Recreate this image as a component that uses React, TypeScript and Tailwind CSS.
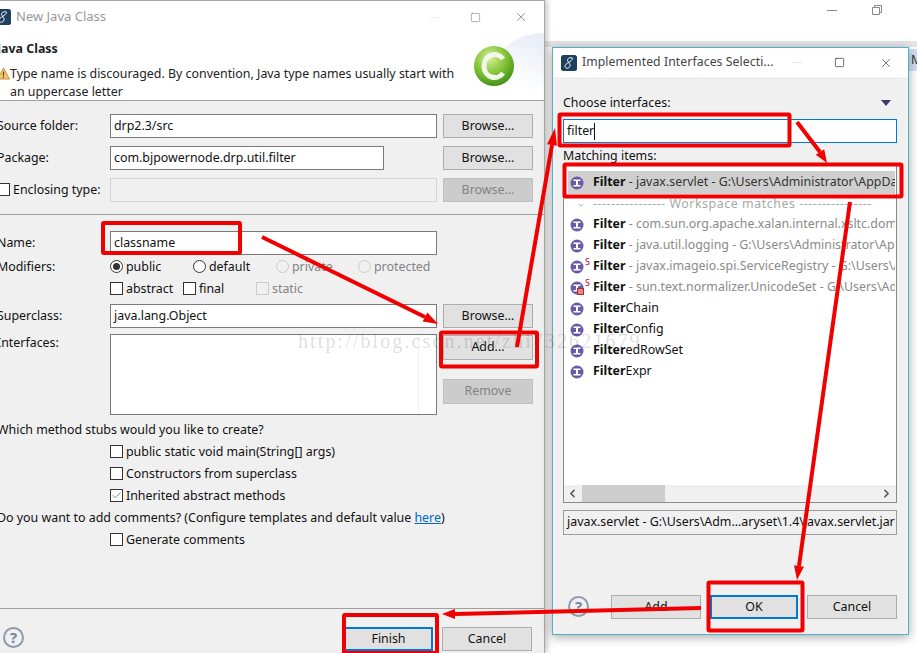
import type { ReactNode } from "react";
import { ChevronLeft, ChevronRight, Check as CheckIcon, X, Minus, Square } from "lucide-react";

const font = "font-['Noto_Sans','Open_Sans',sans-serif]";

function EclipseIcon({ className }: { className: string }) {
  return (
    <svg viewBox="0 0 16 16" className={className}>
      <rect x="0" y="0" width="16" height="16" rx="2.5" fill="#1f3f5f" />
      <path d="M11.5 3C8 2 5.5 4 7 6.5S10 10 8.5 12 4.5 13.5 4 11.5 7 8 9 6.5 12 3.5 11.5 3Z" fill="none" stroke="#fff" strokeWidth="1" />
    </svg>
  );
}

function InterfaceIcon({ overlay }: { overlay?: boolean }) {
  return (
    <svg viewBox="0 0 14 14" className="w-[14px] h-[14px] shrink-0">
      <circle cx="7" cy="7" r="6.5" fill="#6a5aa8" />
      <rect x="3.5" y="3.5" width="7" height="1.5" fill="#fff" />
      <rect x="3.5" y="9" width="7" height="1.5" fill="#fff" />
      <rect x="6" y="4" width="2" height="6" fill="#fff" />
      {overlay && <rect x="7.5" y="7.5" width="6" height="6" fill="#e8868a" stroke="#c0202a" strokeWidth="1" />}
    </svg>
  );
}

function HelpIcon() {
  return (
    <div className="w-[21px] h-[21px] rounded-full border-[2px] border-[#8c9bad] flex items-center justify-center text-[15px] font-bold text-[#73859b] leading-none shrink-0">
      ?
    </div>
  );
}

function Btn({ children, disabled, focused, w = "w-[90px]", h = "h-[24px]" }: { children: ReactNode; disabled?: boolean; focused?: boolean; w?: string; h?: string }) {
  return (
    <div
      className={`${w} ${h} shrink-0 flex items-center justify-center ${
        disabled
          ? "bg-[#cccccc] border border-[#bfbfbf] text-[#838383]"
          : focused
            ? "bg-[#e1e1e1] border-2 border-[#0078d7] text-[#111]"
            : "bg-[#e1e1e1] border border-[#adadad] text-[#111]"
      }`}
    >
      {children}
    </div>
  );
}

function Check({ label, checked, disabled }: { label: string; checked?: boolean; disabled?: boolean }) {
  return (
    <div className={`flex items-center gap-[3px] ${disabled ? "text-[#838383]" : "text-[#111]"}`}>
      <div className={`w-[13px] h-[13px] flex items-center justify-center border ${disabled ? "border-[#cccccc]" : "border-[#333] bg-white"}`}>
        {checked && <CheckIcon size={11} strokeWidth={1.5} className="text-[#555]" />}
      </div>
      <span>{label}</span>
    </div>
  );
}

function Radio({ label, checked, disabled }: { label: string; checked?: boolean; disabled?: boolean }) {
  return (
    <div className={`flex items-center gap-[3px] ${disabled ? "text-[#838383]" : "text-[#111]"}`}>
      <div className={`w-[13px] h-[13px] rounded-full border flex items-center justify-center ${disabled ? "border-[#cccccc]" : "border-[#333] bg-white"}`}>
        {checked && <div className="w-[7px] h-[7px] rounded-full bg-[#333]" />}
      </div>
      <span>{label}</span>
    </div>
  );
}

function Input({ value, className = "flex-1" }: { value?: string; className?: string }) {
  return (
    <div className={`${className} h-[24px] bg-white border border-[#7a7a7a] px-[3px] flex items-center text-[#111]`}>
      {value}
    </div>
  );
}

function FormRow({ label, children, button }: { label: ReactNode; children: ReactNode; button?: ReactNode }) {
  return (
    <div className="flex items-center h-[24px]">
      <div className="w-[113px] shrink-0 text-[#111]">{label}</div>
      <div className="w-[327px] flex">{children}</div>
      <div className="ml-[6px]">{button}</div>
    </div>
  );
}

function NewClassWindow() {
  return (
    <div className="absolute left-[-8px] top-0 w-[553px] h-[653px] bg-[#f0f0f0] border-t border-r border-[#a8a8a8] flex flex-col shadow-[2px_0_6px_rgba(0,0,0,0.25)]">
      <div className="h-[32px] bg-white flex items-center shrink-0">
        <EclipseIcon className="w-[16px] h-[16px] ml-[3px]" />
        <span className="ml-[5px] text-[#999] text-[13px]">New Java Class</span>
        <div className="ml-auto flex items-center">
          <Minus size={13} strokeWidth={1} className="text-[#ddd] mr-[29px]" />
          <Square size={11} strokeWidth={1} className="text-[#555] mr-[33px]" />
          <X size={14} strokeWidth={1} className="text-[#555] mr-[16px]" />
        </div>
      </div>
      <div className="h-[68px] bg-white border-b border-[#a0a0a0] relative shrink-0 pl-[5px] overflow-hidden">
        <div className="absolute right-0 top-0 w-[60px] h-[68px] bg-[linear-gradient(200deg,#e6ebf6,#ffffff_70%)] rounded-tl-[60px]" />
        <div className="font-bold text-[#222] leading-[18px] pt-[7px]">Java Class</div>
        <div className="flex mt-[7px] relative">
          <svg viewBox="0 0 14 14" className="w-[13px] h-[13px] shrink-0 mt-[2px]">
            <path d="M7 1 13.5 13H.5Z" fill="#f4c46c" stroke="#c8923a" />
            <rect x="6.3" y="5" width="1.4" height="4.5" fill="#6b4a12" />
            <rect x="6.3" y="10.4" width="1.4" height="1.4" fill="#6b4a12" />
          </svg>
          <div className="leading-[18px] w-[455px] text-[#222]">
            Type name is discouraged. By convention, Java type names usually start with an uppercase letter
          </div>
        </div>
        <svg viewBox="0 0 44 44" className="absolute left-[480px] top-[12px] w-[44px] h-[44px]">
          <defs>
            <radialGradient id="ball" cx="40%" cy="30%" r="75%">
              <stop offset="0" stopColor="#d8ef9c" />
              <stop offset="0.55" stopColor="#7fc232" />
              <stop offset="1" stopColor="#3c8c14" />
            </radialGradient>
          </defs>
          <circle cx="22" cy="21" r="20" fill="url(#ball)" />
          <path d="M31 14C26 6 12 9 12 21S26 36 31 28" fill="none" stroke="#f2f8ea" strokeWidth="5" />
        </svg>
      </div>

      <div className="pl-[5px] pt-[13px] pb-[12px] flex flex-col gap-[8px] border-b border-[#a0a0a0] shrink-0">
        <FormRow label="Source folder:" button={<Btn>Browse...</Btn>}>
          <Input value="drp2.3/src" />
        </FormRow>
        <FormRow label="Package:" button={<Btn>Browse...</Btn>}>
          <Input value="com.bjpowernode.drp.util.filter" className="w-[274px]" />
        </FormRow>
        <FormRow
          label={<Check label="Enclosing type:" />}
          button={<Btn disabled>Browse...</Btn>}
        >
          <div className="flex-1 h-[24px] border border-[#d4d4d4] bg-[#f0f0f0]" />
        </FormRow>
      </div>

      <div className="pl-[5px] pt-[16px] flex flex-col flex-1 min-h-0">
        <FormRow label="Name:">
          <Input value="classname" />
        </FormRow>
        <div className="flex items-center h-[22px] mt-[1px]">
          <div className="w-[113px] text-[#111]">Modifiers:</div>
          <div className="flex">
            <div className="w-[83px]"><Radio label="public" checked /></div>
            <div className="w-[83px]"><Radio label="default" /></div>
            <div className="w-[82px]"><Radio label="private" disabled /></div>
            <Radio label="protected" disabled />
          </div>
        </div>
        <div className="flex items-center h-[22px]">
          <div className="w-[113px]" />
          <div className="flex">
            <div className="w-[73px]"><Check label="abstract" /></div>
            <div className="w-[73px]"><Check label="final" /></div>
            <Check label="static" disabled />
          </div>
        </div>
        <div className="mt-[4px]">
          <FormRow label="Superclass:" button={<Btn>Browse...</Btn>}>
            <Input value="java.lang.Object" />
          </FormRow>
        </div>
        <div className="flex mt-[6px]">
          <div className="w-[113px] text-[#111]">Interfaces:</div>
          <div className="w-[327px] h-[81px] bg-white border border-[#7a7a7a] flex justify-end">
            <div className="w-[18px] h-full border-l border-[#eef1f6]" />
          </div>
          <div className="ml-[6px] flex flex-col pt-[1px] gap-[19px]">
            <Btn h="h-[25px]">Add...</Btn>
            <Btn disabled h="h-[25px]">Remove</Btn>
          </div>
        </div>
        <div className="text-[#111] mt-[4px] h-[22px] flex items-center">Which method stubs would you like to create?</div>
        <div className="ml-[113px] flex flex-col">
          <div className="h-[22px] flex items-center"><Check label="public static void main(String[] args)" /></div>
          <div className="h-[22px] flex items-center"><Check label="Constructors from superclass" /></div>
          <div className="h-[22px] flex items-center"><Check label="Inherited abstract methods" checked /></div>
        </div>
        <div className="text-[#111] h-[22px] flex items-center">
          <span>Do you want to add comments? (Configure templates and default value&nbsp;<span className="text-[#0066cc] underline">here</span>)</span>
        </div>
        <div className="ml-[113px] h-[22px] flex items-center"><Check label="Generate comments" /></div>
      </div>

      <div className="h-[45px] shrink-0 border-t border-[#a0a0a0] flex items-end pb-[2px] pl-[11px] pr-[12px]">
        <div className="mb-[3px]"><HelpIcon /></div>
        <div className="ml-auto flex gap-[9px]">
          <Btn focused w="w-[89px]">Finish</Btn>
          <Btn>Cancel</Btn>
        </div>
      </div>
    </div>
  );
}

const matches = [
  { name: "Filter", rest: "", detail: "\u00a0- com.sun.org.apache.xalan.internal.xsltc.dom" },
  { name: "Filter", rest: "", detail: "\u00a0- java.util.logging - G:\\Users\\Administrator\\AppData\\Local" },
  { name: "Filter", rest: "", detail: "\u00a0- javax.imageio.spi.ServiceRegistry - G:\\Users\\Administrator", s: true },
  { name: "Filter", rest: "", detail: "\u00a0- sun.text.normalizer.UnicodeSet - G:\\Users\\Administrator\\App", s: true, overlay: true },
  { name: "Filter", rest: "Chain", detail: "" },
  { name: "Filter", rest: "Config", detail: "" },
  { name: "Filter", rest: "edRowSet", detail: "" },
  { name: "Filter", rest: "Expr", detail: "" },
];

function InterfacesWindow() {
  return (
    <div className="absolute left-[552px] top-[47px] w-[357px] h-[588px] bg-[#f0f0f0] border border-[#4fb4c8] flex flex-col shadow-[0_2px_10px_rgba(0,0,0,0.35)]">
      <div className="h-[29px] bg-white flex items-center shrink-0">
        <EclipseIcon className="w-[16px] h-[16px] ml-[8px]" />
        <span className="ml-[5px] text-[#444] text-[12.2px] tracking-[0.1px] whitespace-nowrap">Implemented Interfaces Selecti...</span>
        <div className="ml-auto flex items-center">
          <Minus size={13} strokeWidth={1} className="text-[#ccc] mr-[30px]" />
          <Square size={11} strokeWidth={1.3} className="text-[#111] mr-[34px]" />
          <X size={14} strokeWidth={1} className="text-[#111] mr-[15px]" />
        </div>
      </div>
      <div className="flex flex-col flex-1 pl-[10px] pr-[11px] min-h-0">
        <div className="flex items-center justify-between h-[20px] mt-[16px] text-[#111]">
          <span>Choose interfaces:</span>
          <span className="w-0 h-0 border-x-[5px] border-x-transparent border-t-[6px] border-t-[#3f3a6e] mr-[6px]" />
        </div>
        <div className="h-[24px] mt-[6px] bg-white border border-[#0078d7] px-[3px] flex items-center text-[#111]">
          filter<span className="w-px h-[17px] bg-[#111]" />
        </div>
        <div className="h-[16px] mt-[5px] flex items-center text-[#111]">Matching items:</div>
        <div className="h-[339px] bg-white border border-[#8a8a8a] flex flex-col overflow-hidden">
          <div className="h-[23px] ml-[4px] mr-[1px] mt-[6px] bg-[#cfcfcf] flex items-center shrink-0 whitespace-nowrap overflow-hidden">
            <div className="ml-[2px] w-[23px] shrink-0"><InterfaceIcon /></div>
            <b className="text-[#111]">Filter</b>
            <span className="text-[#333]">&nbsp;- javax.servlet - G:\Users\Administrator\AppData\Local</span>
          </div>
          <div className="h-[20px] pt-[1px] flex items-center shrink-0 whitespace-nowrap text-[#a8a8a8] pl-[29px] relative tracking-[0.55px]">
            <ChevronDownMark />
            ---------------- Workspace matches ----------------
          </div>
          {matches.map((m, i) => (
            <div key={i} className="h-[21px] flex items-center shrink-0 whitespace-nowrap overflow-hidden mr-[1px]">
              <div className="ml-[6px] w-[23px] shrink-0 flex items-start relative">
                <InterfaceIcon overlay={m.overlay} />
                {m.s && <span className="absolute left-[15px] top-[-3px] text-[9px] text-[#b8003c] leading-none">S</span>}
              </div>
              <b className="text-[#111]">{m.name}</b>
              <span className="text-[#111]">{m.rest}</span>
              <span className="text-[#8a8a8a]">{m.detail}</span>
            </div>
          ))}
          <div className="mt-auto h-[17px] bg-[#f0f0f0] flex items-center justify-between shrink-0 px-[1px]">
            <div className="flex items-center h-full flex-1">
              <ChevronLeft size={13} strokeWidth={3} className="text-[#555] ml-[1px]" />
              <div className="ml-[3px] w-[83px] h-full bg-[#cdcdcd]" />
            </div>
            <ChevronRight size={13} strokeWidth={3} className="text-[#555] mr-[2px]" />
          </div>
        </div>
        <div className="h-[25px] mt-[7px] border border-[#9a9a9a] bg-[#f0f0f0] flex items-center px-[3px] text-[#111] whitespace-nowrap overflow-hidden">
          javax.servlet - G:\Users\Adm...aryset\1.4\javax.servlet.jar
        </div>
        <div className="flex-1" />
        <div className="flex items-center pb-[15px]">
          <div className="ml-[5px] mt-[-1px]"><HelpIcon /></div>
          <div className="ml-auto flex gap-[9px]">
            <Btn>Add</Btn>
            <Btn focused w="w-[88px]">OK</Btn>
            <Btn>Cancel</Btn>
          </div>
        </div>
      </div>
    </div>
  );
}

function ChevronDownMark() {
  return (
    <svg viewBox="0 0 8 6" className="absolute left-[14px] top-[9px] w-[6px] h-[5px]">
      <path d="M1 1 4 4 7 1" fill="none" stroke="#8a8a8a" />
    </svg>
  );
}

// red marks somebody drew on the screenshot
function Annotations() {
  const rects = [
    [103, 223, 137, 30],
    [441, 332.5, 96, 34],
    [559.5, 114.5, 230, 31],
    [564.5, 164.5, 337, 32],
    [344, 615, 93, 38],
    [708.5, 582.5, 94, 48],
  ];
  const arrows = [
    [262, 237, 425, 317, 438, 324],
    [517, 347, 552, 145, 555, 128],
    [797, 122, 820, 152, 827, 163],
    [850, 202, 799, 566, 797, 580],
    [701, 608, 455, 614, 442, 614],
  ];
  return (
    <svg viewBox="0 0 917 653" className="absolute left-0 top-0 w-[917px] h-[653px] pointer-events-none">
      {rects.map(([x, y, w, h], i) => (
        <rect key={i} x={x} y={y} width={w} height={h} rx="1" fill="none" stroke="#f00000" strokeWidth="4" />
      ))}
      {arrows.map(([x1, y1, x2, y2, tx, ty], i) => {
        const dx = tx - x2;
        const dy = ty - y2;
        const len = Math.hypot(dx, dy);
        const nx = (-dy / len) * 5;
        const ny = (dx / len) * 5;
        return (
          <g key={i}>
            <line x1={x1} y1={y1} x2={x2} y2={y2} stroke="#f00000" strokeWidth="4" />
            <polygon points={`${tx},${ty} ${x2 + nx},${y2 + ny} ${x2 - nx},${y2 - ny}`} fill="#f00000" />
          </g>
        );
      })}
    </svg>
  );
}

export default function App() {
  return (
    <div className={`relative w-[917px] h-[653px] overflow-hidden bg-white text-[12.4px] ${font}`}>
      <div className="absolute left-[545px] right-0 top-[41px] h-[6px] bg-[#e6e6e6]" />
      <div className="absolute left-[909px] right-0 top-[49px] h-[22px] bg-[#cfe0f0] text-[#333] overflow-hidden flex items-center pl-[2px]">M</div>
      <div className="absolute left-[827px] top-[10px] w-[10px] h-px bg-[#888]" />
      <svg viewBox="0 0 10 10" className="absolute left-[872px] top-[5px] w-[10px] h-[10px]">
        <path d="M2.5 2.5V.5h7v7h-2M.5 2.5h7v7h-7Z" fill="none" stroke="#888" />
      </svg>
      <NewClassWindow />
      <InterfacesWindow />
      <div className="absolute left-[298px] top-[326px] font-['Liberation_Serif',serif] text-[20px] tracking-[2.1px] text-[#000]/15 whitespace-nowrap pointer-events-none">
        http://blog.csdn.net/zhi732621679
      </div>
      <Annotations />
    </div>
  );
}
